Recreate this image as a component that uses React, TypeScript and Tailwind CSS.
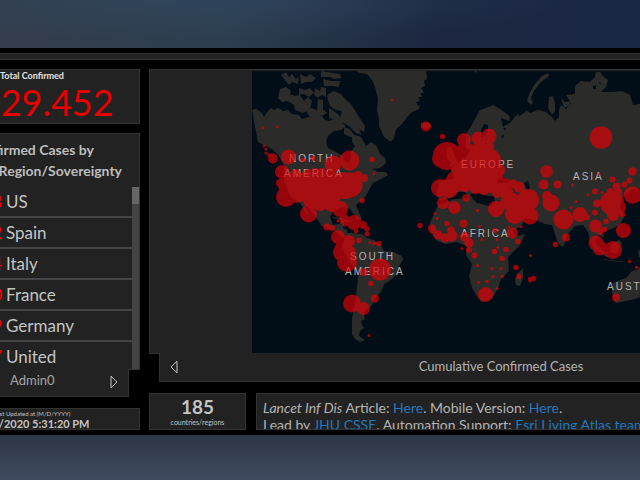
// App.tsx
// Case tracking dashboard: totals column, world map and info panels

const COUNTRIES = [
  { name: 'US', cases: '613.883' },
  { name: 'Spain', cases: '177.632' },
  { name: 'Italy', cases: '165.154' },
  { name: 'France', cases: '131.360' },
  { name: 'Germany', cases: '133.159' },
  { name: 'United', cases: '98.477' },
];

// Outlines of the land masses, in map units
const LAND = [
  // North and Central America
  'M252 110l4-1 6 4 2 4 3-5 4-4 3 2 4-2 5 3 5-1 4 4 7 1 3 4 7-2 5 1 8-2 3 4 5 1 5-3 5-1 2-5 4 2 0 6-4 3 4 3-5 4-7 1-6 5-2 6 2 6 8 4 7 4 1 4 5 3 2-6-1-4 5-7-3-4 0-8 9 3 5 9 5-4 5 3 4 9 5 4 1 5-6 5-8 1 5 3 9 0 2 3-7 4-8 4-4 7-4 7-9 8 6 14-4 1-8-11-8-2-8 3-4 7 3 8 6-1 3-5 3 1-2 8 4 2 1 8 7 2-2 3-10-5-8-7-13-5-7-10-8-10-2 1 5 9-4-3-6-10-9-6-7-16 0-15-5-10-7-7-6-3-8-4z',
  // Canadian arctic
  'M278 98l2-9 6-2 5 4-1 4 4 0-4 7-3-1-5 1z',
  'M288 101l5-5 7-1 4 6 4-4 4 4-2 8-7 4-8-3-1-5z',
  'M281 75l5-3 3 5 3-3 4 5 3-2-1 7-6-2-3 3-4-5z',
  'M300 74l6 3 4-3 6 4-4 4-6 0-5 2z',
  'M299 88l6 2 5-2 4 5-5 4-5-3-5 1z',
  'M315 88l5 3 1-4 5 1 0 9-4-2-5 3-3-4z',
  'M321 71l19 3 1 4-7 1-4-2-9 0z',
  'M323 79l8 2 9 0-1 6-7-1-8 0z',
  'M318 99l5 1 0 9 4 4-5 3-5-4z',
  'M306 110l6-2 6 3 4 6-6 3-7-4z',
  'M327 95l7-4 7 3 4 5 6 5 5 8 5 8 4 6-1 6-5-3 3 6-6-2-7-7-6-3-2-5 5 1-5-8-5-1-6-4-2-6z',
  'M329 108l5 3 6 5-3 4-8-2z',
  'M344 127l6 2 5 7-5 1-6-3z',
  'M372 169l5 2-1 2-5-1z',
  // Greenland
  'M356 71l4 2 7 1 5 6 3 7 3 12-1 11 2 10 0 6 5 11 7 5 3-4 2-9 6-5 5-7 5-5 7-3 1-4-2 1-2-4 4-1-2-4 4 0-1-4 3 0-3-5 4-2-1-5 3-2-1-10z',
  // Caribbean
  'M333 217l10 1 9 4-2 1-9-3-8-2z',
  // South America
  'M337 236l5 1 4-4 6 0 10 1 5 4 7 2 7 5 3 6 10 1 8 4 1 4-4 6-2 8-6 6-7 4-3 8-5 5-4 8-3 3-4 2-1 5 1 4-4 2 1 4 2 3-4 3-1 5 6 4-5 2-5-3-3-5 0-16 3-13 2-18 1-12-6-10-7-12-3-6 3-9z',
  // Eurasia
  'M466 134l4-6 5-9 5-9 6-2 7-3 7 4 7 5 3 3-1 4-8-3 1 4 1 5 5-3 4-3 3-5 3 1 7-5 3-1 2 2 5-2 4-1 7 2 6 5 3 4 4-4 0-7 2-5 5 4 5-6-5-8 9-1 0-8 6-5 9 1 5-5 1-5 4 0 3 4 5 4-2 7-5 5 11 0 10-1 8 4 3 10 14-2 0 85-14 1-11 9-2 9 5 8-5 10-9 4-8 3 1 6-5-3-4 7 4 10-3 0-5-8-3-12-5-7-8 1-7 8-5 13-5-4-6-18-7-1-9-4-11-2-2 5-5 5-11 6-8-14-8-13 3-6-10-2-8-3-5 4-6-8-8 0-5 6-12 2-4-4 3-15 15-2-3-11 7-5 9-7 3-6-4-2z',
  // Novaya Zemlya and other arctic islands
  'M548 73l-6 3-8 9-5 9-2 7 4 4 2-2-2-5 3-7 6-8 9-7z',
  'M549 97l4-1 2 7 0 8-3 4-4-7z',
  'M561 98l4 4 6-1-2 5-5 2z',
  'M517 114l2 1-1 4-2-1zM525 111l2-1-1 3z',
  'M474 71l3 0-1 2z',
  // Iceland and Britain
  'M421 123l7-1 4 4-5 3-6-2z',
  'M446 150l4-4 3 5 3 8 2 5-9 3 2-5-4-4z',
  // Africa
  'M444 203l10-4 18-1 5 5 12 3 12 1 10 23 6 6 8-2-5 11-12 12 1 14-8 8-3 9-6 11-10 3-4-4-6-10-3-12 3-12-6-9 1-9-11-4-10 2-9-3-6-9-1-9 4-9 4-9z',
  'M523 268l-5 5-3 6 1 6 4 1 3-8z',
  // South east Asia
  'M589 238l5 3 13 14 1 3-6-4-12-13zM611 244l8-4 3 3-5 11-7-2zM603 259l15 2 5 0-1 1-18-2zM638 250l10 4 0 8-9-5z',
  // Australia
  'M613 283l7-3 6-2 6-7 5-1 4-5 19 0 0 29-20 3-9 3-10 2-5 1-2-2-2-9z',
];

// Inland water
const WATER = [
  'M481 130l3-6 4 1 0 5-3 6-4 2z',
  'M470 194l8-1 10 3 6 0 1 7-7 0-7-1-8-3z',
  'M524 183l4-2 2 7-2 4z',
  'M503 128l3 0-1 3z',
  'M501 136l3-1-1 4z',
  'M593 86l3-1 0 4-3 0zM599 82l2 1-1 2z',
  'M497 180l6-3 6 3-1 3-10 0z',
];

// [x, y, radius]
const CASES = [
  // North America
  [263, 128, 1.4], [277, 127, 1.4], [392, 100, 1.4], [426, 126.5, 5], [264, 146, 1.4], [266, 149, 1.6],
  [266, 153, 1.5], [269, 155, 2], [273, 158.5, 5], [288.5, 157, 7.5], [303, 160, 2.5], [313, 158.5, 2.6],
  [349.5, 160.5, 10], [372, 159.5, 2.7], [374, 173.5, 1.5], [333, 164, 8.5], [282, 172, 7], [315, 173, 5],
  [296, 174, 5], [308, 173, 4], [322, 173, 5], [364, 178, 4], [350, 185, 12.5], [286, 197, 10],
  [362, 200.5, 2.7], [290, 185, 12], [302, 187, 14], [315, 187, 14], [330, 187, 16], [345, 188, 11],
  [343, 179, 7], [358, 176, 5], [280, 183, 4], [325, 200, 9], [308.5, 214, 8.5], [297, 194, 9],
  [310, 201, 7], [320, 204, 7], [332, 204, 8], [340, 209, 8], [344, 219, 5], [345, 224, 2.5], [338, 221, 1.6],
  // Caribbean and South America
  [354, 222.5, 7.5], [363, 225, 4], [367, 229, 2.7], [367, 234, 2.5], [356, 231, 2.4], [327, 227, 3.5],
  [332, 228, 3], [338, 237, 7], [341, 243, 5], [349, 241, 6], [343, 252, 10], [347, 262, 10],
  [350, 252, 6], [359, 240.5, 2.7], [370, 242.5, 1.6], [374, 243.5, 1.8], [379, 243.5, 2.8],
  [380, 269.5, 11], [364, 272, 4], [371, 283.5, 2.8], [375, 298.5, 3.9], [352, 303.5, 9],
  [363.5, 308.5, 6.5], [369, 335.5, 1.5],
  // Europe
  [442.5, 136.5, 2.7], [464, 140, 7], [478, 138, 6.5], [489, 136, 7.5], [480, 145, 6], [490, 146, 4],
  [447, 156, 14], [440, 159, 8], [461, 155, 8], [470, 152, 8], [462, 149, 5], [477, 160, 11], [490, 160, 11],
  [482, 149, 6], [498, 170, 7], [465, 170, 14], [480, 172, 14], [488, 181, 12], [440, 188, 9], [449, 188, 10],
  [465, 182, 10], [476, 188, 6], [484, 189, 6], [455, 180, 9], [496, 178, 7], [443, 203, 6], [454.5, 207.5, 6.3],
  [466, 198, 3.7],
  // Middle East
  [498, 187, 8], [505, 184, 6], [513, 184, 4.5], [519, 187, 5.5], [497, 193, 5], [507, 194, 7],
  [513, 199, 6], [528, 200, 11], [496, 209, 8], [506, 203, 6], [515, 214, 10], [523, 209, 9], [530, 216, 8.5],
  // Asia
  [546.5, 171.5, 6.3], [543.5, 184.5, 5], [557.5, 184.5, 4], [547, 196, 5], [551, 203, 8.5],
  [572.5, 185, 1.5], [588, 195, 1.5], [595, 191.5, 3], [576, 201.5, 1.6], [571, 207.5, 1.5],
  [601, 137.5, 11.3], [599, 174, 1.6], [612.5, 179.5, 3], [616.5, 186.5, 4], [624.5, 184.5, 3],
  [629.5, 180.5, 3], [632.5, 171.5, 4.2], [632.5, 195, 8.7], [618, 192, 4], [612, 203, 12], [619, 207, 7],
  [597, 203.5, 4], [602, 192.5, 1.6], [610, 191, 3], [613, 215, 6], [606, 221.5, 2.7], [622.5, 214.5, 2.7],
  [595, 212.5, 3], [580, 214.5, 7.5], [587, 217, 3], [563.5, 219.5, 10], [566, 237.5, 4], [555.5, 244.5, 2.8],
  [595.5, 226, 6.5], [600, 232, 3], [604.5, 229.5, 2.7], [623.5, 230.5, 7.5], [596, 243, 7.5],
  [600, 248, 7.5], [613, 250, 9], [629.5, 261.5, 1.7], [636.5, 267.5, 1.8], [616, 297.5, 4],
  // Africa
  [463.5, 223.5, 4], [447, 223.5, 2.8], [477.5, 210.5, 1.7], [479.5, 226.5, 1.5], [495, 230.5, 2.5],
  [512.5, 233, 5.5], [521, 226.5, 1.6], [509, 227, 1.6], [518, 241.5, 2.7], [465, 237, 5], [469, 243, 4.7],
  [469, 250, 3], [462, 248.5, 1.5], [474.5, 255.5, 3], [482, 239.5, 1.5], [497, 239.5, 1.5],
  [494.5, 251.5, 2.8], [498, 247.5, 1.5], [506, 249.5, 2.8], [502, 258.5, 2.8], [477.5, 265.5, 1.6],
  [492, 268.5, 1.6], [501, 268.5, 1.6], [493, 276.5, 1.6], [502.5, 276.5, 1.8], [487, 281.5, 1.7],
  [478.5, 282.5, 1.6], [497, 288.5, 1.6], [485.5, 294.5, 7.5], [516, 267.5, 2.7], [519, 276.5, 2.7],
  [530.5, 279.5, 2.7], [533.5, 278.5, 2.8], [530.5, 255.5, 1.6], [420, 225.5, 2.7], [432, 228.5, 4],
  [438, 235, 4.7], [432, 232, 2], [445, 238, 4.5], [452, 236, 5.5], [451, 230, 3.7], [435, 213.5, 1.5],
  [437, 218.5, 1.6],
];

const LABELS = [
  { text: 'NORTH', x: 289, y: 162 },
  { text: 'AMERICA', x: 284, y: 177 },
  { text: 'EUROPE', x: 461, y: 168 },
  { text: 'ASIA', x: 573, y: 180 },
  { text: 'AFRICA', x: 461, y: 237 },
  { text: 'SOUTH', x: 350, y: 260 },
  { text: 'AMERICA', x: 345, y: 275 },
  { text: 'AUSTRALIA', x: 607, y: 290 },
];

function WorldMap() {
  return (
    <svg
      viewBox="252 71 600 282"
      preserveAspectRatio="xMinYMid slice"
      className="block h-[282px] min-w-0 flex-1 bg-[#010e18]"
      role="img"
      aria-label="World map of confirmed cases"
    >
      <g fill="#2b2b29">
        {LAND.map((d) => (
          <path key={d} d={d} />
        ))}
      </g>
      <g fill="#010e18">
        {WATER.map((d) => (
          <path key={d} d={d} />
        ))}
      </g>
      <g
        fill="#b4b4b4"
        className="font-['Liberation_Sans',sans-serif] text-[10px] tracking-[2px]"
      >
        {LABELS.map((label) => (
          <text key={label.text + label.y} x={label.x} y={label.y}>
            {label.text}
          </text>
        ))}
      </g>
      <g fill="#e60005" opacity="0.66">
        {CASES.map(([x, y, r]) => (
          <circle key={`${x}-${y}`} cx={x} cy={y} r={r} />
        ))}
      </g>
    </svg>
  );
}

function Totals() {
  return (
    <div className="-ml-[76px] flex w-[216px] shrink-0 flex-col">
      <section className="border border-[#333] bg-[#222] pb-px text-center">
        <h2 className="text-[9px] leading-3 font-bold text-[#e4e4e4]">Total Confirmed</h2>
        <p className="text-[36px] leading-10 text-[#e60000]">2.029.452</p>
      </section>

      <section className="mt-[9px]">
        <div className="border border-[#333] bg-[#222]">
          <h2 className="pt-[5px] pb-[6px] text-center text-[14px] leading-[21px] font-bold text-[#bdbdbd]">
            Confirmed Cases by
            <br />
            Country/Region/Sovereignty
          </h2>
          <div className="flex h-[182px]">
            <ul className="flex-1 overflow-hidden">
              {COUNTRIES.map((country) => (
                <li
                  key={country.name}
                  className="flex gap-1 border-b-2 border-[#444] text-[17px] leading-[29px] text-[#c4c4c4]"
                >
                  <span className="w-[77px] text-right text-[#e60000]">{country.cases}</span>
                  <span>{country.name}</span>
                </li>
              ))}
            </ul>
            <div className="w-[7px] bg-[#444]">
              <div className="h-[17px] bg-[#666]" />
            </div>
          </div>
        </div>
        {/* Tab strip */}
        <div className="relative -mt-px mr-[11px] flex h-7 items-center justify-between border-r border-b border-[#333] bg-[#222] pr-[10px] pb-[3px] pl-[86px] text-[#a5a5a5]">
          <span className="text-[13px]">Admin0</span>
          <button type="button" aria-label="Next list" className="mt-px">
            <svg viewBox="0 0 8 14" className="h-[14px] w-2" fill="none" stroke="#c4c4c4">
              <path d="M1 1.2v11.6L7 7z" />
            </svg>
          </button>
        </div>
      </section>

      <section className="mt-[11px] border border-[#333] bg-[#222] text-center text-[#c4c4c4]">
        <p className="text-[6px] leading-[9px]">Last Updated at (M/D/YYYY)</p>
        <p className="text-[11px] leading-[11px] font-bold">4/15/2020 5:31:20 PM</p>
      </section>
    </div>
  );
}

function MapColumn() {
  return (
    <div className="-mr-[212px] flex min-w-0 flex-1 flex-col">
      <section>
        <div className="flex border border-[#333] bg-[#222] pt-px pl-[102px]">
          <WorldMap />
        </div>
        <div className="relative -mt-px ml-[10px] flex h-[29px] items-center border-b border-l border-[#333] bg-[#222] pr-7 pl-[10px]">
          <button type="button" aria-label="Previous map">
            <svg viewBox="0 0 8 14" className="h-[14px] w-2" fill="none" stroke="#c4c4c4">
              <path d="M7 1.2v11.6L1 7z" />
            </svg>
          </button>
          <span className="flex-1 text-center text-[13px] text-[#b4b4b4]">Cumulative Confirmed Cases</span>
        </div>
      </section>

      <div className="mt-[11px] flex h-[37px] gap-[10px]">
        <section className="w-[97px] border border-[#333] bg-[#222] text-center text-[#c4c4c4]">
          <p className="pt-[3px] text-[19px] leading-5 font-bold">185</p>
          <p className="text-[7px] leading-[11px]">countries/regions</p>
        </section>
        <section className="flex-1 overflow-hidden border border-[#333] bg-[#222] pt-[5px] pl-[6px] text-[14px] leading-[17px] whitespace-nowrap text-[#b4b4b4]">
          <p>
            <i>Lancet Inf Dis</i> Article: <a href="#article" className="text-[#2277bd]">Here</a>. Mobile Version:{' '}
            <a href="#mobile" className="text-[#2277bd]">Here</a>.
          </p>
          <p>
            Lead by <a href="#jhu" className="text-[#2277bd]">JHU CSSE</a>. Automation Support:{' '}
            <a href="#esri" className="text-[#2277bd]">Esri Living Atlas team</a>
          </p>
        </section>
      </div>
    </div>
  );
}

export default function App() {
  return (
    <div className="flex min-h-screen flex-col overflow-hidden bg-[#2b3646] font-[Lato,sans-serif]">
      <div className="h-12 bg-[radial-gradient(ellipse_at_30%_0%,#30496399,transparent_60%),linear-gradient(to_right,#343d4b,#2d3e50_35%,#1c2640_68%,#1b2844)]" />
      <main className="bg-black pt-[5px] pb-[5px]">
        <div className="h-[7px] border-y border-[#333] bg-[#222]" />
        <div className="mt-[9px] flex gap-[9px]">
          <Totals />
          <MapColumn />
        </div>
      </main>
      <div className="flex-1 bg-linear-to-b from-[#2d3645] to-[#404b60]" />
    </div>
  );
}
